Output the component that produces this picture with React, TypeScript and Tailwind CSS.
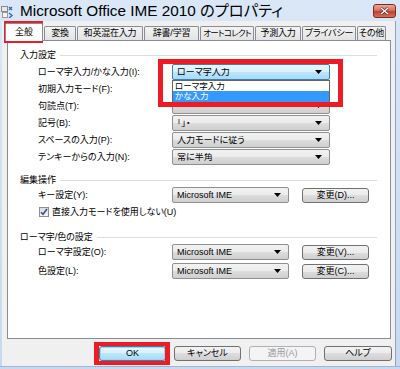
import React from "react";

const F = "font-['Liberation_Sans','Noto_Sans_CJK_JP',sans-serif] [font-feature-settings:'palt']";

function Arrow() {
  return (
    <svg width="7" height="4" viewBox="0 0 7 4" className="shrink-0">
      <path d="M0 0h7L3.5 4z" fill="#000" />
    </svg>
  );
}

function Combo({ text, w, hot }: { text: string; w: string; hot?: boolean }) {
  return (
    <div
      className={`h-[16px] ${w} shrink-0 rounded-[2px] border flex items-center pl-[4px] pr-[7px] ${
        hot
          ? "border-[#3c7fb1] bg-[linear-gradient(#eaf6fd_0%,#d9f0fc_50%,#bee6fd_50%,#a7d9f5_100%)]"
          : "border-[#8e8f8f] bg-[linear-gradient(#f2f2f2_0%,#ebebeb_50%,#dddddd_50%,#cfcfcf_100%)]"
      }`}
    >
      <span className="flex-1 truncate leading-none">{text}</span>
      <Arrow />
    </div>
  );
}

function Btn({ text, w, def, disabled }: { text: string; w: string; def?: boolean; disabled?: boolean }) {
  let cls = "border-[#707070] bg-[linear-gradient(#f2f2f2_0%,#ebebeb_50%,#dddddd_50%,#cfcfcf_100%)] text-black";
  if (def) cls = "border-[#3c7fb1] bg-[linear-gradient(#eaf6fd_0%,#d9f0fc_50%,#bee6fd_50%,#a7d9f5_100%)] text-black shadow-[inset_0_0_0_1px_#8fdcf8]";
  if (disabled) cls = "border-[#adb2b5] bg-[#f4f4f4] text-[#9a9a9a]";
  return (
    <div className={`h-[15px] ${w} shrink-0 rounded-[3px] border flex items-center justify-center leading-none whitespace-nowrap ${cls}`}>
      {text}
    </div>
  );
}

function GroupHeader({ label, h }: { label: string; h: string }) {
  return (
    <div className={`flex items-center ${h} pl-[12px]`}>
      <span className="leading-none whitespace-nowrap">{label}</span>
      <div className="flex-1 ml-[4px] mr-[13px] h-px bg-[#d5dfe5]" />
    </div>
  );
}

function Row({ label, text, hot }: { label: string; text: string; hot?: boolean }) {
  return (
    <div className="flex items-center h-[16px]">
      <span className="w-[164px] pl-[30px] leading-none whitespace-nowrap">{label}</span>
      <Combo text={text} w="w-[158px]" hot={hot} />
    </div>
  );
}

function Row2({ label, btn }: { label: string; btn: string }) {
  return (
    <div className="flex items-center h-[16px]">
      <span className="w-[164px] pl-[30px] leading-none whitespace-nowrap">{label}</span>
      <Combo text="Microsoft IME" w="w-[117px]" />
      <div className="ml-[13px]">
        <Btn text={btn} w="w-[67px]" />
      </div>
    </div>
  );
}

function Tab({ text, w, sel, tight }: { text: string; w: string; sel?: boolean; tight?: boolean }) {
  if (sel)
    return (
      <div className={`relative z-10 -mb-px h-[18px] ${w} shrink-0 bg-white border border-b-0 border-[#898c95] rounded-t-[2px] flex items-center justify-center leading-none whitespace-nowrap`}>
        {text}
      </div>
    );
  return (
    <div className={`h-[14px] ${w} shrink-0 border border-b-0 border-[#898c95] rounded-t-[2px] bg-[linear-gradient(#f3f3f3,#e3e3e3)] flex items-center justify-center leading-none whitespace-nowrap overflow-hidden ${tight ? "tracking-[-0.7px] text-[8.5px]" : "tracking-[-0.2px]"}`}>
      {text}
    </div>
  );
}

function Check() {
  return (
    <div className="w-[10px] h-[10px] border border-[#8e8f8f] bg-[linear-gradient(#dcdcdc,#f4f4f4)] flex items-center justify-center">
      <svg width="8" height="8" viewBox="0 0 8 8">
        <path d="M1 4.2L3 6.3L7 1" stroke="#3b4fa0" strokeWidth="1.6" fill="none" />
      </svg>
    </div>
  );
}

function AppIcon() {
  return (
    <svg width="13" height="13" viewBox="0 0 13 13">
      <rect x="0.5" y="1.5" width="6" height="5" fill="#e8e8e8" stroke="#8a8a8a" />
      <rect x="1.5" y="7.5" width="5" height="5" fill="#f4f4f4" stroke="#9a9a9a" />
      <path d="M8 2l3 3M8 5l3-3" stroke="#2a6fbf" strokeWidth="1.4" />
      <path d="M8 8l3 2.5L8 13" stroke="#2a6fbf" strokeWidth="1.4" fill="none" />
    </svg>
  );
}

export default function App() {
  return (
    <div className={`relative w-[400px] h-[369px] overflow-hidden flex flex-col bg-[linear-gradient(#d9e7f6,#c6d9ef)] ${F} text-[9px] text-black`}>
      {/* title bar */}
      <div className="h-[21px] flex items-center shrink-0">
        <div className="ml-[1px] mt-[1px]">
          <AppIcon />
        </div>
        <span className="ml-[6px] text-[15.3px] leading-none text-black whitespace-nowrap">Microsoft Office IME 2010 のプロパティ</span>
        <div className="flex-1" />
        <div className="self-start mt-[4px] w-[23px] h-[14px] rounded-[3px] border border-[#7a2b24] bg-[linear-gradient(#e9a99b_0%,#d47060_45%,#c2422f_55%,#d2715d_100%)] flex items-center justify-center mr-[4px]">
          <svg width="9" height="8" viewBox="0 0 9 8">
            <path d="M1 1l7 6M8 1L1 7" stroke="#5a1a14" strokeWidth="2.6" />
            <path d="M1 1l7 6M8 1L1 7" stroke="#fff" strokeWidth="1.5" />
          </svg>
        </div>
      </div>

      {/* body */}
      <div className="ml-[2px] mr-[4px] h-[345px] shrink-0 bg-[#f0f0f0] flex flex-col border-r border-[#8ea3bd]">
        {/* tabs */}
        <div className="h-[19px] flex items-end pl-[3px] gap-[1px]">
          <Tab text="全般" w="w-[38px]" sel />
          <Tab text="変換" w="w-[32px]" />
          <Tab text="和英混在入力" w="w-[66px]" />
          <Tab text="辞書/学習" w="w-[55px]" />
          <Tab text="オートコレクト" w="w-[54px]" tight />
          <Tab text="予測入力" w="w-[46px]" />
          <Tab text="プライバシー" w="w-[54px]" />
          <Tab text="その他" w="w-[29px]" />
        </div>

        {/* panel */}
        <div className="ml-[5px] w-[384px] h-[299px] shrink-0 border border-[#898c95] bg-white pt-[7px]">
          <GroupHeader label="入力設定" h="h-[14px]" />
          <div className="mt-[2px] flex flex-col gap-[1px]">
            <Row label="ローマ字入力/かな入力(I):" text="ローマ字入力" hot />
            <Row label="初期入力モード(F):" text="" />
            <Row label="句読点(T):" text="" />
            <Row label="記号(B):" text="「」・" />
            <Row label="スペースの入力(P):" text="入力モードに従う" />
            <Row label="テンキーからの入力(N):" text="常に半角" />
          </div>

          <div className="mt-[8px]">
            <GroupHeader label="編集操作" h="h-[14px]" />
          </div>
          <Row2 label="キー設定(Y):" btn="変更(D)..." />
          <div className="mt-[2px] h-[14px] flex items-center pl-[31px]">
            <Check />
            <span className="ml-[3px] leading-none whitespace-nowrap">直接入力モードを使用しない(U)</span>
          </div>

          <div className="mt-[12px]">
            <GroupHeader label="ローマ字/色の設定" h="h-[12px]" />
          </div>
          <div className="mt-[1px] flex flex-col gap-[3px]">
            <Row2 label="ローマ字設定(O):" btn="変更(V)..." />
            <Row2 label="色設定(L):" btn="変更(C)..." />
          </div>
        </div>

        {/* buttons */}
        <div className="mt-[7px] flex pl-[97px] gap-[8px]">
          <Btn text="OK" w="w-[67px]" def />
          <Btn text="キャンセル" w="w-[67px]" />
          <Btn text="適用(A)" w="w-[67px]" disabled />
          <Btn text="ヘルプ" w="w-[68px]" />
        </div>
      </div>
      <div className="flex-1 border-t border-[#9fb7d4]" />

      {/* open dropdown list */}
      <div className="absolute left-[172px] top-[80px] w-[158px] h-[23px] bg-white border border-[#646464] flex flex-col overflow-hidden">
        <div className="h-[10px] pl-[2px] flex items-center leading-none text-[8.5px] overflow-hidden">ローマ字入力</div>
        <div className="h-[11px] pl-[2px] bg-[#3399ff] text-white flex items-center leading-none text-[8.5px] overflow-hidden">かな入力</div>
      </div>

      {/* red highlight boxes */}
      <div className="absolute left-[4px] top-[21px] w-[39px] h-[22px] border-[4px] border-[#ed1c24]" />
      <div className="absolute left-[158px] top-[59px] w-[185px] h-[48px] border-[5px] border-[#ed1c24]" />
      <div className="absolute left-[94px] top-[342px] w-[76px] h-[23px] border-x-[5px] border-y-[4px] border-[#ed1c24]" />
    </div>
  );
}
